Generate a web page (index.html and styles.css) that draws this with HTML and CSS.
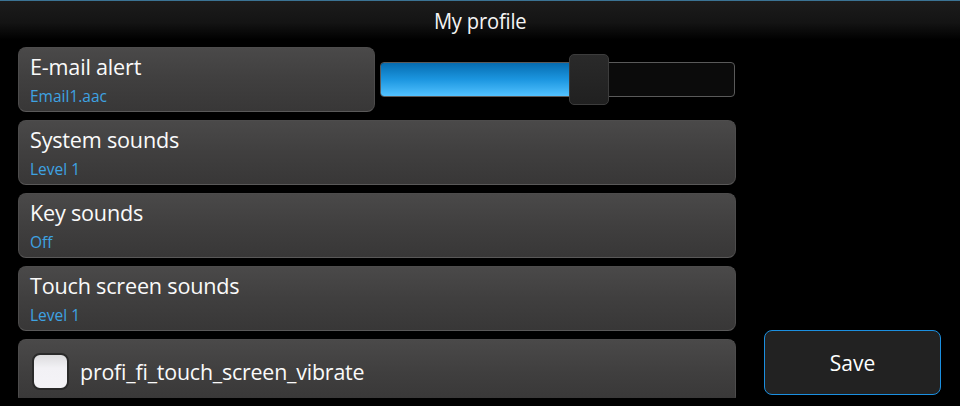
FILE: index.html
```html
<!DOCTYPE html>
<html>
<head>
<meta charset="utf-8">
<link rel="stylesheet" href="styles.css">
</head>
<body>
<div class="screen">
  <header class="titlebar"><span class="title-text">My profile</span></header>
  <main class="content">
    <section class="list">
      <div class="row-split">
        <div class="item short">
          <div class="item-title">E-mail alert</div>
          <div class="item-sub">Email1.aac</div>
        </div>
        <div class="slider">
          <div class="track">
            <div class="fill" style="width:190px"></div>
          </div>
          <div class="thumb"></div>
        </div>
      </div>
      <div class="item">
        <div class="item-title">System sounds</div>
        <div class="item-sub">Level 1</div>
      </div>
      <div class="item">
        <div class="item-title">Key sounds</div>
        <div class="item-sub">Off</div>
      </div>
      <div class="item">
        <div class="item-title">Touch screen sounds</div>
        <div class="item-sub">Level 1</div>
      </div>
      <div class="item check-item">
        <span class="checkbox"></span>
        <span class="check-label">profi_fi_touch_screen_vibrate</span>
      </div>
    </section>
    <aside class="actions">
      <button class="save">Save</button>
    </aside>
  </main>
</div>
</body>
</html>
```
FILE: styles.css
```css
* { box-sizing: border-box; }
html, body {
  margin: 0;
  padding: 0;
  background: #000;
  width: 960px;
  height: 406px;
  overflow: hidden;
  font-family: "Open Sans", "DejaVu Sans", sans-serif;
  color: #fff;
}
.screen { width: 960px; height: 406px; overflow: hidden; }
.titlebar {
  height: 40px;
  border-top: 1px solid #3b7394;
  background: linear-gradient(#1c1c1c 0%, #141414 55%, #000 100%);
  text-align: center;
  font-size: 21px;
  line-height: 40px;
  color: #f4f4f4;
}
.title-text {
  display: inline-block;
  transform: scaleX(0.96);
  letter-spacing: -0.2px;
}
.content {
  display: flex;
  padding: 7px 0 0 18px;
}
.list {
  width: 718px;
  height: 351px;
  overflow: hidden;
  display: flex;
  flex-direction: column;
  gap: 8px;
}
.row-split {
  display: flex;
  align-items: center;
  gap: 5px;
  flex: none;
}
.item {
  height: 65px;
  flex: none;
  border-radius: 8px;
  background: linear-gradient(#4a4949 0%, #403f3f 50%, #383737 100%);
  border: 1px solid #4d4c4c;
  border-bottom-color: #5a5959;
  padding: 4px 11px 0 11px;
}
.item.short { width: 357px; }
.item-title {
  font-size: 21.6px;
  line-height: 30px;
  color: #fafafa;
  letter-spacing: -0.2px;
}
.item-sub {
  font-size: 15.5px;
  line-height: 22px;
  color: #3ea3e3;
  margin-top: 3px;
}
.slider {
  position: relative;
  width: 356px;
  height: 51px;
  display: flex;
  align-items: center;
}
.track {
  width: 355px;
  height: 35px;
  border: 1px solid #5a5a5a;
  border-radius: 4px;
  background: #0b0b0b;
  overflow: hidden;
}
.fill {
  height: 100%;
  background: linear-gradient(#066cb0 0%, #1c96e0 50%, #52c2ff 100%);
}
.thumb {
  position: absolute;
  left: 189px;
  top: 0;
  width: 40px;
  height: 51px;
  border-radius: 5px;
  background: linear-gradient(#2a2a2a, #202020);
  border: 1px solid #3c3c3c;
}
.check-item {
  display: flex;
  align-items: center;
  gap: 11px;
  padding: 0 13px 0 13px;
}
.checkbox {
  width: 37px;
  height: 37px;
  border-radius: 8px;
  border: 2px solid #2a2a2a;
  background: linear-gradient(#dcdcde 0%, #f2f1f5 40%, #f4f3f7 100%);
  flex: none;
}
.check-label {
  font-size: 21.4px;
  color: #fafafa;
  letter-spacing: -0.2px;
}
.actions {
  padding: 283px 0 0 28px;
}
.save {
  width: 177px;
  height: 65px;
  border: 1px solid #1b8fe0;
  border-radius: 8px;
  background: #222222;
  color: #fff;
  font-family: "Open Sans", "DejaVu Sans", sans-serif;
  font-size: 21px;
  padding: 0;
}
```
